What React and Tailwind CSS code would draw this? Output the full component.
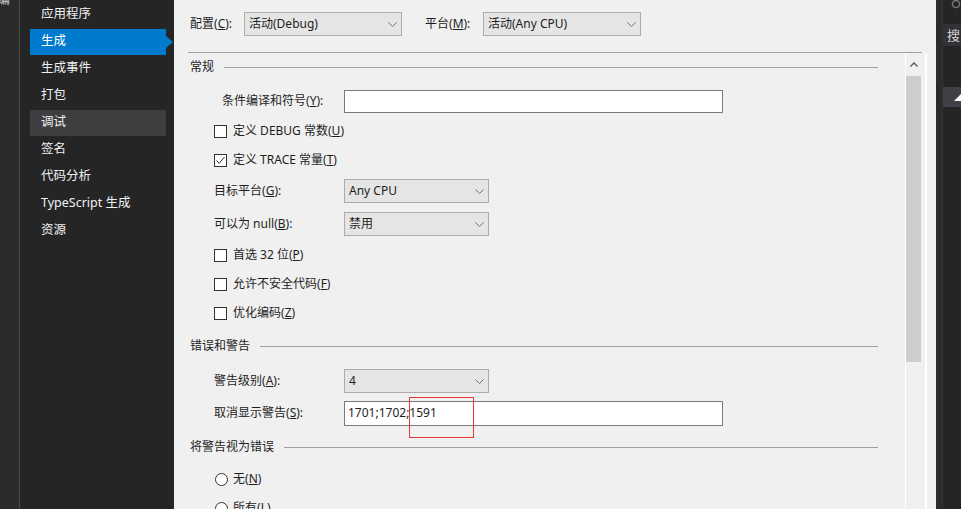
import React from 'react';

const NAV = ['应用程序', '生成', '生成事件', '打包', '调试', '签名', '代码分析', 'TypeScript 生成', '资源'];

function Chevron() {
  return (
    <svg width="9" height="5" viewBox="0 0 9 5" className="shrink-0">
      <polyline points="0.5,0.5 4.5,4.5 8.5,0.5" fill="none" stroke="#707070" strokeWidth="1" />
    </svg>
  );
}

function Combo({ value, className = '' }) {
  return (
    <div className={`flex h-[24px] items-center justify-between border border-[#acacac] bg-[#e5e5e5] pl-[4px] pr-[4px] text-[#1e1e1e] ${className}`}>
      <span>{value}</span>
      <Chevron />
    </div>
  );
}

function Label({ text, k, rest = '):' }) {
  return (
    <span>
      {text}(<u>{k}</u>{rest}
    </span>
  );
}

function CheckRow({ checked, text, k, mt }) {
  return (
    <div className={`flex h-[24px] shrink-0 items-center pl-[40px] ${mt}`}>
      <span className="flex h-[13px] w-[13px] items-center justify-center border border-[#333] bg-white">
        {checked && (
          <svg width="11" height="11" viewBox="0 0 11 11">
            <polyline points="1.5,5.5 4.2,8.3 9.5,2" fill="none" stroke="#333" strokeWidth="1" />
          </svg>
        )}
      </span>
      <span className="ml-[6px]">
        <Label text={text} k={k} rest=")" />
      </span>
    </div>
  );
}

function Section({ title, mt }) {
  return (
    <div className={`flex h-[20px] shrink-0 items-center pl-[16px] pr-[27px] ${mt}`}>
      <span>{title}</span>
      <div className="ml-[10px] h-px flex-1 bg-[#a0a0a0]" />
    </div>
  );
}

function FieldRow({ label, k, children, mt, indent = '' }) {
  return (
    <div className={`flex h-[24px] shrink-0 items-center pl-[40px] ${mt}`}>
      <span className={`w-[130px] ${indent}`}>
        <Label text={label} k={k} />
      </span>
      {children}
    </div>
  );
}

export default function App() {
  return (
    <div className="flex h-[509px] w-[961px] overflow-hidden text-[12px] leading-none font-['Noto_Sans','Noto_Sans_CJK_SC',sans-serif]">
      <div className="w-[20px] shrink-0 overflow-hidden border-r border-[#4a4a4a] bg-[#2b2b2b]">
        <div className="-ml-[3px] -mt-[8px] text-[13px] text-[#cfcfcf]">编</div>
      </div>

      <nav className="w-[154px] shrink-0 bg-[#252526] pt-[1px] text-[12.5px] text-[#f1f1f1]">
        {NAV.map((item) => {
          const active = item === '生成';
          const hover = item === '调试';
          return (
            <div key={item} className="flex h-[27px] items-center">
              <div
                className={`relative ml-[10px] flex h-[26px] w-[136px] items-center pl-[11px] ${
                  active ? 'bg-[#007acc] text-white' : hover ? 'bg-[#3e3e40]' : ''
                }`}
              >
                {item}
                {active && (
                  <span className="absolute -right-[7px] top-[7px] h-0 w-0 border-y-[6px] border-l-[7px] border-y-transparent border-l-[#007acc]" />
                )}
              </div>
            </div>
          );
        })}
      </nav>

      <main className="flex w-[762px] shrink-0 flex-col overflow-hidden bg-[#f0f0f0] text-[#1e1e1e]">
        <div className="flex h-[48px] shrink-0 items-center pl-[16px]">
          <span className="w-[54px]">
            <Label text="配置" k="C" />
          </span>
          <Combo value="活动(Debug)" className="w-[158px]" />
          <span className="ml-[23px] w-[58px]">
            <Label text="平台" k="M" />
          </span>
          <Combo value="活动(Any CPU)" className="w-[158px]" />
        </div>
        <div className="ml-[14px] mt-[4px] h-px w-[734px] shrink-0 bg-[#a0a0a0]" />

        <div className="flex min-h-0 flex-1 overflow-hidden">
          <div className="relative flex w-[731px] shrink-0 flex-col pt-[4px]">
            <Section title="常规" />
            <FieldRow label="条件编译和符号" k="Y" mt="mt-[12px]" indent="pl-[8px]">
              <div className="h-[23px] w-[379px] border border-[#7a7a7a] bg-white" />
            </FieldRow>
            <CheckRow text="定义 DEBUG 常数" k="U" mt="mt-[6px]" />
            <CheckRow checked text="定义 TRACE 常量" k="T" mt="mt-[5px]" />
            <FieldRow label="目标平台" k="G" mt="mt-[7px]">
              <Combo value="Any CPU" className="w-[145px]" />
            </FieldRow>
            <FieldRow label="可以为 null" k="B" mt="mt-[9px]">
              <Combo value="禁用" className="w-[145px]" />
            </FieldRow>
            <CheckRow text="首选 32 位" k="P" mt="mt-[7px]" />
            <CheckRow text="允许不安全代码" k="F" mt="mt-[5px]" />
            <CheckRow text="优化编码" k="Z" mt="mt-[5px]" />
            <Section title="错误和警告" mt="mt-[11px]" />
            <FieldRow label="警告级别" k="A" mt="mt-[13px]">
              <Combo value="4" className="w-[145px]" />
            </FieldRow>
            <FieldRow label="取消显示警告" k="S" mt="mt-[8px]">
              <div className="flex h-[25px] w-[379px] items-center border border-[#7a7a7a] bg-white pl-[3px]">
                1701;1702;1591
              </div>
            </FieldRow>
            <Section title="将警告视为错误" mt="mt-[12px]" />
            <div className="mt-[10px] flex h-[24px] shrink-0 items-center pl-[41px]">
              <span className="h-[13px] w-[13px] rounded-full border border-[#333] bg-white" />
              <span className="ml-[5px]">
                <Label text="无" k="N" rest=")" />
              </span>
            </div>
            <div className="mt-[5px] flex h-[24px] shrink-0 items-center pl-[41px]">
              <span className="h-[13px] w-[13px] rounded-full border border-[#333] bg-white" />
              <span className="ml-[5px]">
                <Label text="所有" k="L" rest=")" />
              </span>
            </div>
            <svg width="65" height="41" className="pointer-events-none absolute left-[235px] top-[344px]">
              <rect x="0.5" y="0.5" width="64" height="40" fill="none" stroke="#e53935" strokeWidth="1" />
            </svg>
          </div>

          <div className="flex w-[22px] shrink-0 flex-col border-l border-r-2 border-white">
            <div className="flex h-[23px] w-[15px] shrink-0 items-center justify-center">
              <svg width="8" height="5" viewBox="0 0 8 5">
                <polyline points="0.5,4.5 4,1 7.5,4.5" fill="none" stroke="#555" strokeWidth="1.3" />
              </svg>
            </div>
            <div className="h-[286px] w-[15px] shrink-0 bg-[#cdcdcd]" />
          </div>
        </div>
      </main>

      <aside className="flex w-[25px] shrink-0 bg-[#252526]">
        <div className="w-[7px] border-r border-[#333337] bg-[#2b2b2b]" />
        <div className="flex flex-1 flex-col overflow-hidden">
          <div className="flex h-[20px] items-start pl-[8px]">
            <svg width="14" height="14" viewBox="0 0 14 14" className="-mt-[3px]">
              <circle cx="7" cy="7" r="5" fill="none" stroke="#7a7a7a" strokeWidth="2" />
            </svg>
          </div>
          <div className="mt-[4px] flex h-[22px] items-center bg-[#333337] pl-[4px] text-[13px] text-[#d0d0d0]">搜</div>
          <div className="mt-[41px] flex h-[20px] items-center justify-end bg-[#3f3f46]">
            <span className="h-0 w-0 border-b-[7px] border-l-[7px] border-b-white border-l-transparent" />
          </div>
        </div>
      </aside>
    </div>
  );
}
